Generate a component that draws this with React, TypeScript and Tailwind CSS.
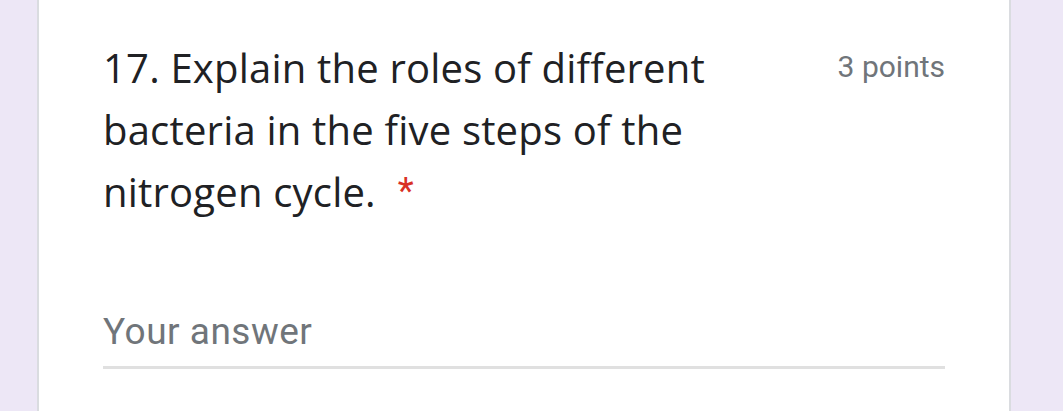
import React from 'react';

export default function App() {
  return (
    <div className="h-[411px] w-[1063px] overflow-hidden bg-[#ede7f6] pl-[37px]">
      <div className="h-full w-[974px] border-x-2 border-[#dadce0] bg-white px-[64px]">
        <div className="flex items-start justify-between pt-[37px]">
          <h2 className="w-[640px] font-['Open_Sans',sans-serif] text-[40px] leading-[62px] tracking-[0.2px] text-[#202124]">
            17. Explain the roles of different bacteria in the five steps of the nitrogen cycle.
            <span className="ml-[22px] align-[4px] font-['Roboto',sans-serif] text-[37px] leading-none text-[#d93025]">*</span>
          </h2>
          <span className="mt-[13px] font-['Roboto',sans-serif] text-[30px] leading-[34px] text-[#70757a]">
            3 points
          </span>
        </div>
        <div className="mt-[89px] border-b-[3px] border-[#e0e0e0] pb-[14px] font-['Roboto',sans-serif] text-[37px] leading-[40px] tracking-[0.5px] text-[#70757a]">
          Your answer
        </div>
      </div>
    </div>
  );
}
